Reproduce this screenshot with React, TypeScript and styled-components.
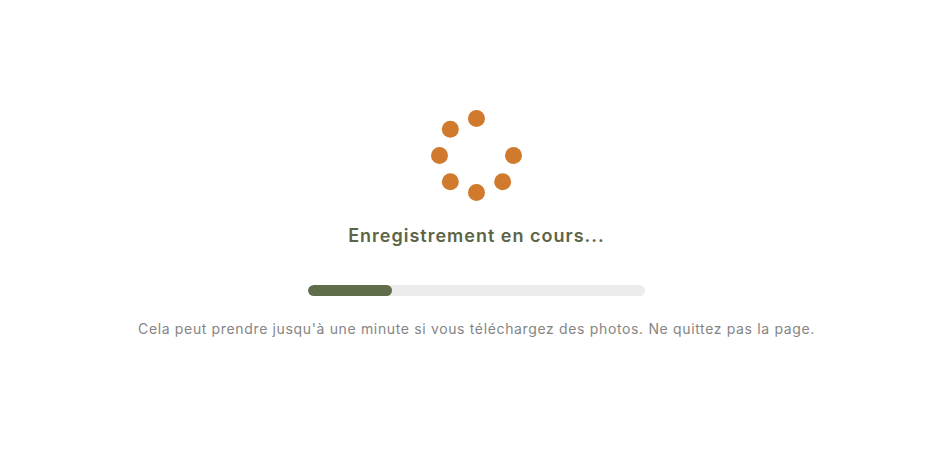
import styled, { createGlobalStyle } from "styled-components";

const GlobalStyle = createGlobalStyle`
    html, body {
        margin: 0;
        padding: 0;
        background: #ffffff;
    }
    body {
        font-family: Inter, "Noto Sans", sans-serif;
    }
`;

const dots = [0, 1, 2, 3, 4, 5, 6];

const Spinner = () => {
    const size = 91;
    const c = size / 2;
    const r = 37;
    return (
        <svg width={size} height={size} viewBox={`0 0 ${size} ${size}`}>
            {dots.map((i) => {
                // start at top, go counter-clockwise, leaving the top-right slot empty
                const angle = (-90 - i * 45) * (Math.PI / 180);
                return (
                    <circle
                        key={i}
                        cx={c + r * Math.cos(angle)}
                        cy={c + r * Math.sin(angle)}
                        r={8.5}
                        fill="#d07a2e"
                    />
                );
            })}
        </svg>
    );
};

const progress = 25;

export default function App() {
    return (
        <>
            <GlobalStyle />
            <Page>
                <Spinner />
                <Title>Enregistrement en cours...</Title>
                <Track>
                    <Fill style={{ width: `${progress}%` }} />
                </Track>
                <Hint>
                    Cela peut prendre jusqu'à une minute si vous téléchargez des photos. Ne quittez pas la page.
                </Hint>
            </Page>
        </>
    );
}

const Page = styled.div`
    height: 459px;
    display: flex;
    flex-direction: column;
    align-items: center;
    padding: 110px 0 0 3px;
    box-sizing: border-box;
`;

const Title = styled.div`
    margin-top: 23px;
    font-size: 18px;
    font-weight: 600;
    letter-spacing: 1px;
    color: #5c6546;
    line-height: 24px;
`;

const Track = styled.div`
    margin-top: 37px;
    width: 337px;
    height: 11px;
    border-radius: 6px;
    background: #ececec;
    overflow: hidden;
`;

const Fill = styled.div`
    height: 100%;
    border-radius: 6px;
    background: #5f6d4a;
`;

const Hint = styled.div`
    margin-top: 23px;
    font-size: 14px;
    letter-spacing: 0.65px;
    color: #858585;
    line-height: 20px;
`;
